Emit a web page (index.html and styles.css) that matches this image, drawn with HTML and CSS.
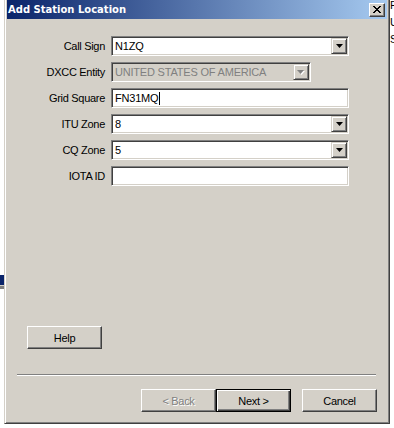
FILE: index.html
```html
<!DOCTYPE html>
<html>
<head>
<meta charset="utf-8">
<link rel="stylesheet" href="styles.css">
</head>
<body>
<div class="screen">
  <div class="left-strip"></div>
  <div class="dialog">
    <div class="titlebar">
      <span class="title">Add Station Location</span>
      <span class="close">
        <svg width="8" height="7" viewBox="0 0 8 7"><path d="M0 0h2v1h1v1h2v-1h1v-1h2v1h-1v1h-1v1h-1v1h1v1h1v1h1v1h-2v-1h-1v-1h-2v1h-1v1h-2v-1h1v-1h1v-1h1v-1h-1v-1h-1v-1h-1z" fill="#000"/></svg>
      </span>
    </div>
    <div class="form">
      <label class="lbl">Call Sign</label>
      <div class="field combo"><span class="val">N1ZQ</span><span class="dd"><svg width="7" height="4" viewBox="0 0 7 4"><path d="M0 0h7l-3.5 4z" fill="#000"/></svg></span></div>

      <label class="lbl">DXCC Entity</label>
      <div class="field combo disabled short"><span class="val">UNITED STATES OF AMERICA</span><span class="dd"><svg width="8" height="5" viewBox="0 0 8 5"><path d="M1 1h7l-3.5 4z" fill="#fff"/><path d="M0 0h7l-3.5 4z" fill="#808080"/></svg></span></div>

      <label class="lbl">Grid Square</label>
      <div class="field"><span class="val">FN31MQ<span class="caret"></span></span></div>

      <label class="lbl">ITU Zone</label>
      <div class="field combo"><span class="val">8</span><span class="dd"><svg width="7" height="4" viewBox="0 0 7 4"><path d="M0 0h7l-3.5 4z" fill="#000"/></svg></span></div>

      <label class="lbl">CQ Zone</label>
      <div class="field combo"><span class="val">5</span><span class="dd"><svg width="7" height="4" viewBox="0 0 7 4"><path d="M0 0h7l-3.5 4z" fill="#000"/></svg></span></div>

      <label class="lbl">IOTA ID</label>
      <div class="field"><span class="val"></span></div>
    </div>
    <div class="help-row"><span class="btn">Help</span></div>
    <div class="sep"></div>
    <div class="footer">
      <span class="btn disabled-btn">&lt; Back</span>
      <span class="btn default-btn">Next &gt;</span>
      <span class="btn cancel">Cancel</span>
    </div>
  </div>
  <div class="right-strip"><span>F</span><span>U</span><span>S</span></div>
</div>
</body>
</html>
```

FILE: styles.css
```css
html, body {
  margin: 0;
  padding: 0;
  background: #ffffff;
}
body {
  width: 394px;
  height: 428px;
  overflow: hidden;
  font-family: "Liberation Sans", Arial, sans-serif;
  font-size: 11px;
  color: #000;
}
.screen {
  display: flex;
  width: 394px;
  height: 428px;
}
.left-strip {
  width: 4px;
  flex: none;
  background: linear-gradient(to bottom, #ffffff 0 275px, #0a246a 275px 285px, #d4d0c8 285px 286px, #808080 286px 289px, #ffffff 289px);
}
.dialog {
  box-sizing: border-box;
  width: 386px;
  height: 424px;
  flex: none;
  background: #d4d0c8;
  border-left: 1px solid #d4d0c8;
  border-right: 1px solid #404040;
  border-bottom: 1px solid #404040;
  box-shadow: inset 1px 0 #ffffff, inset -1px -1px #808080;
  padding: 0 2px;
  display: flex;
  flex-direction: column;
}
.titlebar {
  height: 19px;
  display: flex;
  align-items: center;
  justify-content: space-between;
  background: linear-gradient(to right, #0a246a, #a6caf0);
  padding-left: 1px;
}
.title {
  font-family: "DejaVu Sans", Verdana, sans-serif;
  font-weight: bold;
  font-size: 10px;
  color: #ffffff;
}
.close {
  box-sizing: border-box;
  width: 16px;
  height: 14px;
  margin-right: 2px;
  background: #d4d0c8;
  border: 1px solid;
  border-color: #ffffff #404040 #404040 #ffffff;
  box-shadow: inset -1px -1px #808080;
  display: flex;
  align-items: center;
  justify-content: center;
  padding-right: 1px;
}
.close svg { display: block; }
.form {
  display: grid;
  grid-template-columns: 98px auto;
  column-gap: 6px;
  row-gap: 6px;
  padding-top: 17px;
  justify-content: start;
}
.lbl {
  text-align: right;
  align-self: center;
  letter-spacing: -0.3px;
  white-space: nowrap;
}
.field {
  box-sizing: border-box;
  width: 238px;
  height: 20px;
  background: #ffffff;
  border: 1px solid;
  border-color: #808080 #ffffff #ffffff #808080;
  box-shadow: inset 1px 1px #404040, inset -1px -1px #d4d0c8;
  display: flex;
  align-items: center;
  padding: 2px 2px 2px 3px;
}
.field.short { width: 200px; }
.field.disabled { background: #d4d0c8; color: #808080; }
.val {
  flex: 1;
  white-space: nowrap;
  overflow: hidden;
  letter-spacing: -0.2px;
  display: flex;
  align-items: center;
}
.caret {
  display: inline-block;
  width: 1px;
  height: 13px;
  background: #000;
  margin-left: 1px;
}
.dd {
  box-sizing: border-box;
  width: 16px;
  height: 16px;
  flex: none;
  margin-right: -1px;
  background: #d4d0c8;
  border: 1px solid;
  border-color: #d4d0c8 #404040 #404040 #d4d0c8;
  box-shadow: inset 1px 1px #ffffff, inset -1px -1px #808080;
  display: flex;
  align-items: center;
  justify-content: center;
}
.dd svg { display: block; }
.help-row {
  margin-top: 140px;
  padding-left: 20px;
  display: flex;
}
.btn {
  box-sizing: border-box;
  width: 75px;
  height: 23px;
  background: #d4d0c8;
  border: 1px solid;
  border-color: #ffffff #404040 #404040 #ffffff;
  box-shadow: inset -1px -1px #808080;
  display: flex;
  align-items: center;
  justify-content: center;
  letter-spacing: -0.3px;
}
.sep {
  margin: 25px 11px 0 10px;
  height: 0;
  border-top: 1px solid #808080;
  border-bottom: 1px solid #ffffff;
}
.footer {
  margin-top: 13px;
  display: flex;
  justify-content: flex-end;
  padding-right: 10px;
}
.disabled-btn {
  color: #808080;
  text-shadow: 1px 1px #ffffff;
}
.default-btn {
  border: 1px solid #000;
  box-shadow: inset 1px 1px #ffffff, inset -1px -1px #404040, inset -2px -2px #808080;
}
.cancel { margin-left: 11px; }
.right-strip {
  width: 4px;
  flex: none;
  overflow: hidden;
  display: flex;
  flex-direction: column;
  font-size: 11px;
  line-height: 17px;
  margin-top: -3px;
}
.right-strip span { display: block; }
```
